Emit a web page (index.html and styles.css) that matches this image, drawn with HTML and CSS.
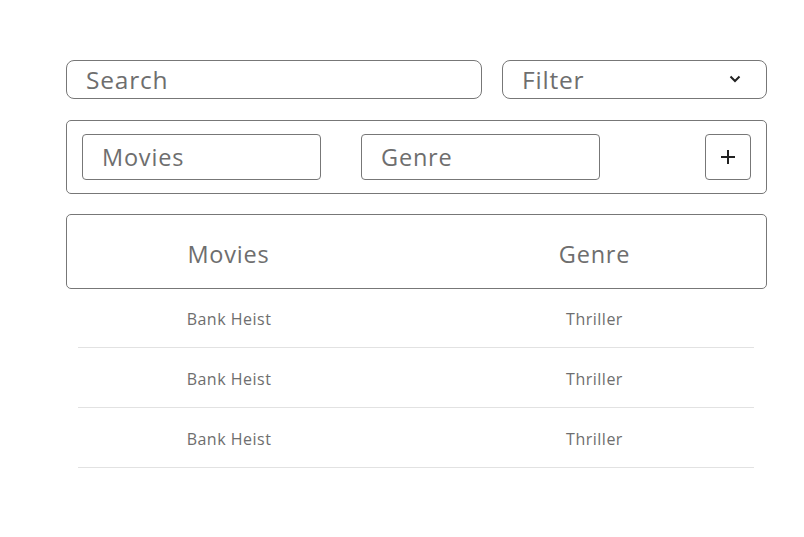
FILE: index.html
```html
<!DOCTYPE html>
<html>
<head>
<meta charset="utf-8">
<link rel="stylesheet" href="styles.css">
</head>
<body>
<div class="page">
  <div class="toolbar">
    <div class="field search">Search</div>
    <div class="field filter">
      <span>Filter</span>
      <svg class="chev" width="12" height="8" viewBox="0 0 12 8"><path d="M1.5 1.5 L6 6 L10.5 1.5" fill="none" stroke="#222" stroke-width="2"/></svg>
    </div>
  </div>
  <div class="panel">
    <div class="input">Movies</div>
    <div class="input">Genre</div>
    <div class="spacer"></div>
    <button class="add">
      <svg width="16" height="16" viewBox="0 0 16 16"><path d="M8 1 V15 M1 8 H15" stroke="#222" stroke-width="2"/></svg>
    </button>
  </div>
  <div class="thead">
    <div class="th c1">Movies</div>
    <div class="th c2">Genre</div>
  </div>
  <div class="rows">
    <div class="row"><div class="td c1">Bank Heist</div><div class="td c2">Thriller</div></div>
    <div class="row"><div class="td c1">Bank Heist</div><div class="td c2">Thriller</div></div>
    <div class="row"><div class="td c1">Bank Heist</div><div class="td c2">Thriller</div></div>
  </div>
</div>
</body>
</html>
```
FILE: styles.css
```css
* { box-sizing: border-box; }
body {
  margin: 0;
  background: #fff;
  font-family: "Open Sans", "Liberation Sans", sans-serif;
  color: #6e6e6e;
}
.page {
  width: 701px;
  margin-left: 66px;
  padding-top: 60px;
}
.toolbar {
  display: flex;
  gap: 20px;
}
.field {
  height: 39px;
  border: 1px solid #777;
  border-radius: 8px;
  display: flex;
  align-items: center;
  padding-left: 19px;
  font-size: 24.5px;
  letter-spacing: 0.8px;
  padding-bottom: 1px;
}
.search { width: 416px; }
.filter {
  width: 265px;
  justify-content: space-between;
  padding-right: 25px;
}
.panel {
  margin-top: 21px;
  height: 74px;
  border: 1px solid #777;
  border-radius: 5px;
  display: flex;
  align-items: center;
  padding: 0 15px;
  gap: 40px;
}
.input {
  width: 239px;
  height: 46px;
  border: 1px solid #777;
  border-radius: 4px;
  display: flex;
  align-items: center;
  padding-left: 19px;
  font-size: 23.5px;
  letter-spacing: 0.8px;
}
.spacer { flex: 1; }
.add {
  width: 46px;
  height: 46px;
  border: 1px solid #777;
  border-radius: 4px;
  background: #fff;
  display: flex;
  align-items: center;
  justify-content: center;
  padding: 0;
}
.thead {
  margin-top: 20px;
  height: 75px;
  border: 1px solid #777;
  border-radius: 5px;
  display: grid;
  grid-template-columns: 323px 1fr;
  column-gap: 33px;
  align-items: center;
  font-size: 23.5px;
  letter-spacing: 0.8px;
  padding-top: 4px;
}
.th { text-align: center; }
.rows {
  margin: 0 13px 0 12px;
}
.row {
  height: 60px;
  border-bottom: 1px solid #e2e2e2;
  display: grid;
  grid-template-columns: 302px 1fr;
  column-gap: 55px;
  align-items: center;
  font-size: 16px;
  letter-spacing: 0.5px;
  padding-top: 2px;
}
.row:first-child { height: 59px; }
.td { text-align: center; }
```
